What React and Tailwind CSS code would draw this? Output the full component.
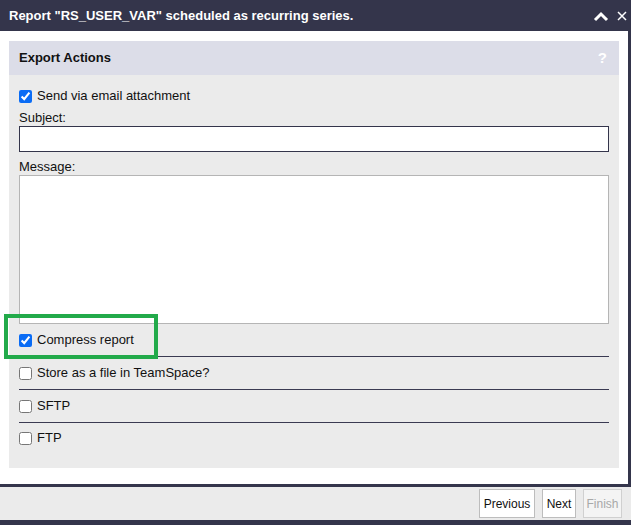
import React from "react";

function Check({ checked, label }) {
  return (
    <label className="flex items-center gap-[5px] h-[16px]">
      <input
        type="checkbox"
        defaultChecked={checked}
        className="m-0 w-[13px] h-[13px] accent-[#0a6cf5]"
      />
      <span>{label}</span>
    </label>
  );
}

export default function App() {
  return (
    <div
      className="w-[631px] h-[525px] bg-[#34354b] flex flex-col text-[13px] text-[#111]"
      style={{ fontFamily: '"Liberation Sans", Arial, Helvetica, sans-serif' }}
    >
      <div className="h-[31px] flex items-center justify-between pl-[9px] pr-[3px] text-white">
        <span className="font-bold text-[13px]">
          Report "RS_USER_VAR" scheduled as recurring series.
        </span>
        <div className="flex items-center gap-[7px]">
          <svg width="16" height="12" viewBox="0 0 16 12">
            <path d="M2 10 L8 4 L14 10" fill="none" stroke="white" strokeWidth="3" />
          </svg>
          <svg width="12" height="12" viewBox="0 0 12 12">
            <path d="M2 2 L10 10 M10 2 L2 10" fill="none" stroke="white" strokeWidth="1.5" />
          </svg>
        </div>
      </div>
      <div className="w-[628px] h-[453px] bg-white pt-[10px] px-[9px] relative">
        <div className="w-[610px] h-[427px] bg-[#ebebeb] flex flex-col">
          <div className="h-[34px] bg-[#dcdde8] flex items-center justify-between pl-[10px] pr-[12px]">
            <span className="font-bold">Export Actions</span>
            <span className="font-bold text-white text-[15px]">?</span>
          </div>
          <div className="px-[10px] flex flex-col">
            <div className="mt-[13px]">
              <Check checked label="Send via email attachment" />
            </div>
            <div className="mt-[6px] leading-[16px]">Subject:</div>
            <input
              type="text"
              className="w-[590px] h-[26px] bg-white border border-[#34354b] outline-none"
            />
            <div className="mt-[7px] leading-[16px]">Message:</div>
            <textarea className="w-[590px] h-[149px] bg-white border border-[#b5b5b5] resize-none outline-none block" />
            <div className="h-[33px] flex items-center border-b border-[#3a3a52]">
              <Check checked label="Compress report" />
            </div>
            <div className="h-[33px] flex items-center border-b border-[#3a3a52]">
              <Check label="Store as a file in TeamSpace?" />
            </div>
            <div className="h-[33px] flex items-center border-b border-[#3a3a52]">
              <Check label="SFTP" />
            </div>
            <div className="h-[30px] flex items-center">
              <Check label="FTP" />
            </div>
          </div>
        </div>
        <div className="absolute left-[4px] top-[283px] w-[154px] h-[45px] border-[4px] border-[#22aa4a]" />
      </div>
      <div className="h-[3px]" />
      <div className="h-[33px] bg-[#ebebeb] flex items-center justify-end gap-[7px] pr-[9px]">
        <button className="h-[29px] w-[56px] text-[12px] bg-white border border-[#bdbdbd] text-[#111]">Previous</button>
        <button className="h-[29px] w-[34px] text-[12px] bg-white border border-[#bdbdbd] text-[#111]">Next</button>
        <button className="h-[29px] w-[39px] text-[12px] bg-[#f4f4f4] border border-[#d0d0d0] text-[#a8a8a8]">Finish</button>
      </div>
    </div>
  );
}
